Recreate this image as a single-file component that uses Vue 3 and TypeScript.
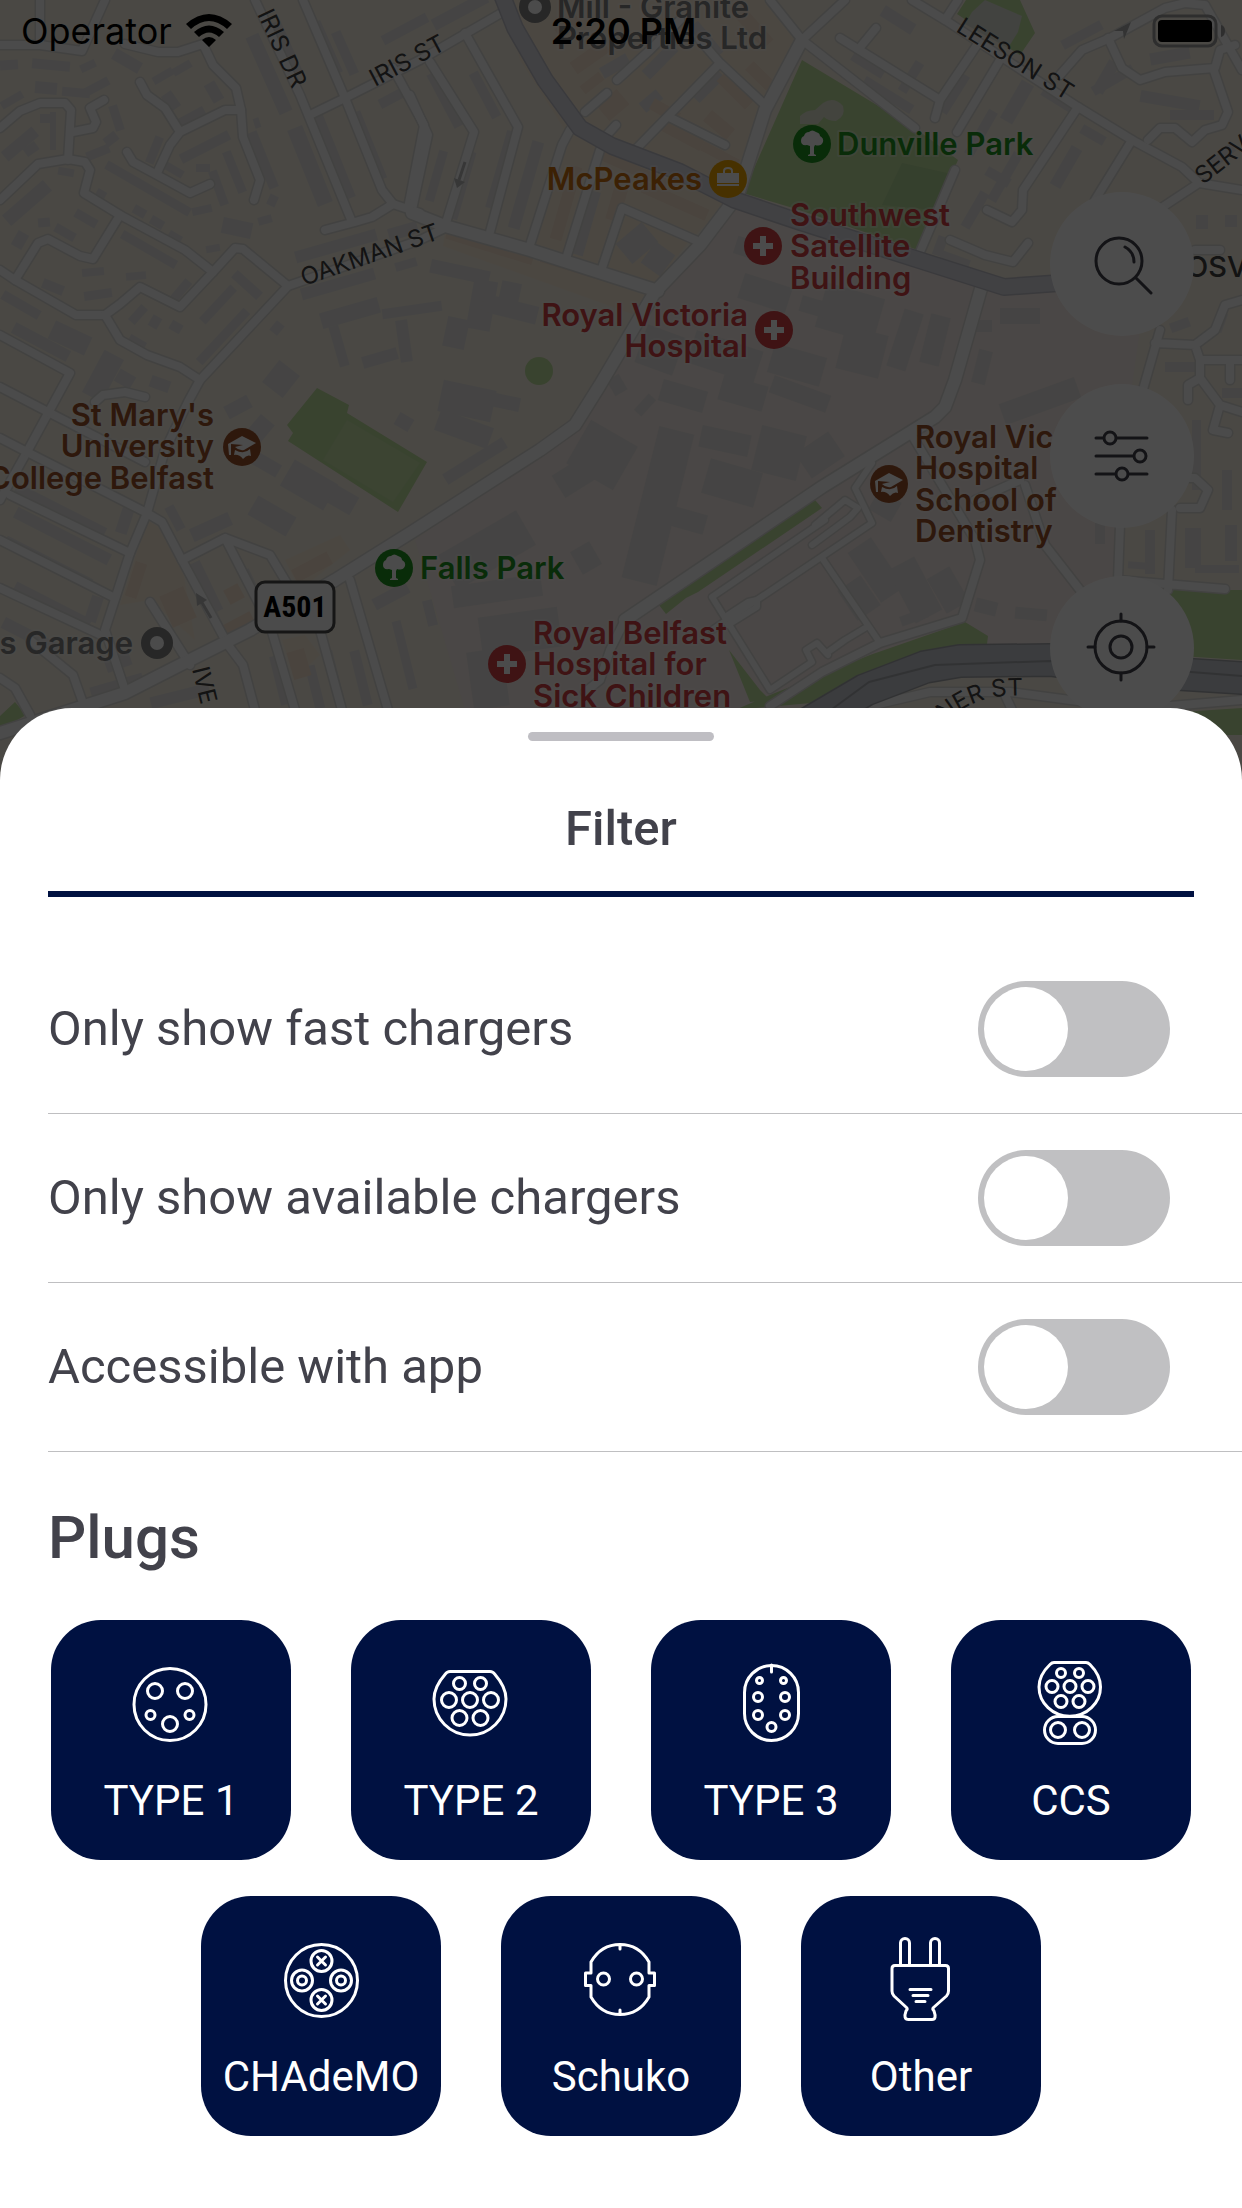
<script setup lang="ts">
import { ref } from 'vue'

interface FilterOption {
  id: string
  label: string
  enabled: boolean
}

interface Plug {
  id: string
  label: string
}

interface Poi {
  kind: 'shop' | 'park' | 'hospital' | 'school' | 'place'
  x: number
  y: number
  textX: number
  anchor: 'start' | 'end'
  baseline: number
  lines: string[]
}

const options = ref<FilterOption[]>([
  { id: 'fast', label: 'Only show fast chargers', enabled: false },
  { id: 'available', label: 'Only show available chargers', enabled: false },
  { id: 'app', label: 'Accessible with app', enabled: false },
])

const plugs: Plug[] = [
  { id: 'type1', label: 'TYPE 1' },
  { id: 'type2', label: 'TYPE 2' },
  { id: 'type3', label: 'TYPE 3' },
  { id: 'ccs', label: 'CCS' },
  { id: 'chademo', label: 'CHAdeMO' },
  { id: 'schuko', label: 'Schuko' },
  { id: 'other', label: 'Other' },
]

const selected = ref<string[]>(plugs.map((plug) => plug.id))

function togglePlug(id: string): void {
  selected.value = selected.value.includes(id)
    ? selected.value.filter((item) => item !== id)
    : [...selected.value, id]
}

const pois: Poi[] = [
  { kind: 'place', x: 535, y: 7, textX: 557, anchor: 'start', baseline: 18, lines: ['Mill - Granite', 'Properties Ltd'] },
  { kind: 'shop', x: 728, y: 179, textX: 702, anchor: 'end', baseline: 190, lines: ['McPeakes'] },
  { kind: 'park', x: 812, y: 144, textX: 837, anchor: 'start', baseline: 155, lines: ['Dunville Park'] },
  { kind: 'hospital', x: 763, y: 246, textX: 790, anchor: 'start', baseline: 226, lines: ['Southwest', 'Satellite', 'Building'] },
  { kind: 'hospital', x: 774, y: 330, textX: 748, anchor: 'end', baseline: 326, lines: ['Royal Victoria', 'Hospital'] },
  { kind: 'school', x: 242, y: 447, textX: 214, anchor: 'end', baseline: 426, lines: ["St Mary's", 'University', 'College Belfast'] },
  { kind: 'park', x: 394, y: 568, textX: 420, anchor: 'start', baseline: 579, lines: ['Falls Park'] },
  { kind: 'place', x: 157, y: 643, textX: 133, anchor: 'end', baseline: 654, lines: ['s Garage'] },
  { kind: 'hospital', x: 507, y: 664, textX: 533, anchor: 'start', baseline: 644, lines: ['Royal Belfast', 'Hospital for', 'Sick Children'] },
  { kind: 'school', x: 889, y: 484, textX: 915, anchor: 'start', baseline: 448, lines: ['Royal Vic', 'Hospital', 'School of', 'Dentistry'] },
]

const streets: string[] = [
  'M0 45H40L82 51L105 0M40 0V45',
  'M125 44L158 52H178L203 44L213 65L236 88L241 110L243 137L260 180L254 200',
  'M140 82L147 95L165 108L180 132L225 110H241M180 132L170 145L157 173',
  'M127 152L133 162L157 175L190 193L210 184',
  'M0 128L20 111L40 103H65L71 110L68 160M73 132L93 128L96 122L90 108L104 100',
  'M0 200L38 164L68 159L85 162L90 170L84 193L120 215L185 250L213 272',
  'M120 215L93 259L80 256L48 239L38 243L15 280',
  'M0 270L15 280L76 315H105L120 304L140 287L180 307L213 272L235 248L243 249L288 286L200 380L188 402L165 450L147 513L130 553L105 630L125 690',
  'M105 315L120 340L147 355L180 367L200 380',
  'M255 0L300 95L352 222M325 230L355 222L372 217L393 204L420 213',
  'M303 0L345 98L382 190L393 204M310 115L345 98L420 60L510 8',
  'M393 68L424 125L408 208',
  'M0 335L70 373L28 450L0 500M288 286L420 240L443 229',
  'M465 33L518 127L490 232M430 62L474 132L445 226M410 95L428 135L412 210',
  'M570 130L562 145L530 245M600 150L565 262',
  'M585 112L607 93M617 80L650 50L680 20M616 125L605 137',
  'M635 150L720 63L700 40M669 117L725 145M720 63L765 105',
  'M770 0L802 40L915 128M802 40L845 0',
  'M622 208L702 243M622 208L602 268',
  'M912 0L945 20L1078 107L1132 140L1182 167L1199 183L1155 212M1199 183L1242 190',
  'M840 38L940 100L935 118M862 45L876 28M977 45L940 100M1000 60L957 132M945 20L958 0',
  'M955 170L920 252M1078 107L1023 190L1022 210L1012 222L987 210M1132 140L1095 200',
  'M950 240L985 255L1013 262L1028 243',
  'M1060 75L1082 50L1110 38L1165 8L1185 3L1205 5L1242 70',
  'M1108 38L1122 68L1140 80L1165 72L1215 68L1220 50L1235 45M1213 68L1228 112L1222 125L1205 130L1192 142L1175 128H1160L1148 140',
  'M1160 330L1140 400M1155 343L1195 345L1215 330L1225 305L1242 300M1195 345L1200 360H1242M1200 360V378L1188 385V400M1200 378L1220 405L1242 412M1220 405L1213 430L1228 433M1230 360V380M1195 250H1220',
  'M1120 525L1118 580L1225 589M1172 510L1168 590M1180 508H1200L1208 490L1195 478H1185',
  'M910 432L975 540L980 560L962 618L880 643L822 672L770 706',
  'M1025 485L1045 545L1080 590L1100 605M975 500L1020 480',
  'M0 387L50 413L145 462M0 438L27 452L145 512L162 522L182 560L228 645L243 665L255 710',
  'M10 495L130 553M0 540L115 598M0 588L105 637M30 640L73 675L83 703M0 678L15 688L30 715',
  'M182 560L225 538L270 555L300 605M225 538L262 610M150 602L190 665',
  'M272 632L295 710M320 630L342 710M350 580L388 710M95 402L103 395L125 392L145 397',
  'M625 620L610 650L600 680L585 692M870 706L930 692H1010L1100 704L1170 706L1242 700M1005 695L1012 710',
]

const thinStreets: string[] = [
  'M872 463L855 488L872 523L712 630M712 597L770 690L812 662L806 650L817 643L828 655M712 597L825 520',
  'M728 625L757 607V600L748 602L725 617M812 545L850 517L858 508L845 500L815 525M822 558L878 640M828 652L845 640L865 628',
]

const mainStreets: string[] = [
  'M412 213L445 226L530 250L658 291',
  'M802 40L765 110L738 195L700 245L655 292L600 385L575 425L540 450L415 530L335 580L250 630L180 665L125 693L0 733',
  'M982 285L955 380L945 407L935 417L822 487L625 620',
]

// x, y, width, height, rotation in degrees
const buildings: number[][] = [
  [0, 60, 18, 10, -4], [32, 60, 38, 10, 5], [80, 62, 16, 8, -25], [112, 55, 30, 12, 30], [35, 82, 22, 12, 5],
  [62, 88, 28, 9, 5], [84, 82, 26, 9, -28], [0, 96, 24, 8, -30], [40, 114, 16, 9, 0], [50, 112, 6, 38, 0],
  [152, 72, 22, 8, -30], [172, 64, 20, 8, -30], [165, 92, 12, 18, -35], [178, 112, 28, 10, -28], [208, 82, 12, 20, -30],
  [178, 142, 54, 10, -27], [150, 136, 9, 28, 22], [112, 105, 9, 26, -18], [86, 148, 24, 9, -22], [104, 134, 14, 10, -38],
  [0, 138, 40, 12, -40], [24, 144, 14, 10, -35], [0, 196, 54, 14, -41], [58, 168, 16, 8, 10], [100, 184, 96, 9, 30],
  [164, 166, 20, 8, 30], [196, 164, 14, 8, 0], [214, 170, 9, 36, -20], [230, 150, 9, 44, -22], [258, 130, 10, 60, -22],
  [254, 118, 6, 10, -18], [222, 220, 30, 16, 12], [258, 216, 14, 8, -15], [268, 195, 9, 11, 25], [192, 206, 20, 8, -12],
  [96, 190, 10, 8, 30], [133, 207, 13, 9, 30], [150, 218, 14, 9, 30], [168, 233, 14, 8, 30], [206, 245, 14, 7, -10],
  [38, 218, 12, 9, -5], [14, 232, 12, 16, 30], [54, 228, 22, 9, 30], [74, 214, 24, 9, 30], [118, 245, 62, 9, 30],
  [176, 278, 9, 26, 40], [230, 280, 34, 10, 42], [42, 282, 22, 10, 22], [82, 268, 22, 8, -5], [84, 290, 28, 9, -8],
  [126, 272, 20, 8, -5], [0, 300, 42, 10, 30], [50, 328, 40, 20, 25], [10, 336, 62, 12, 28], [92, 352, 22, 48, 28],
  [195, 300, 46, 9, -47], [188, 332, 70, 9, -47], [128, 310, 20, 9, -48], [150, 316, 10, 12, 30], [170, 322, 12, 10, 30],
  [272, 322, 10, 12, 40], [268, 365, 26, 28, 38], [128, 338, 18, 9, 30], [116, 372, 18, 14, 30], [150, 378, 20, 12, 20],
  [262, 32, 14, 84, -24], [280, 20, 12, 56, -24], [302, 125, 16, 82, -22], [325, 110, 14, 92, -22], [362, 110, 12, 72, -22],
  [378, 92, 32, 10, -28], [294, 240, 84, 12, -16], [300, 278, 76, 12, -16], [388, 225, 30, 12, -16], [395, 260, 22, 9, -16],
  [320, 305, 60, 16, -16], [334, 325, 10, 42, -16], [382, 305, 60, 10, -8], [398, 320, 12, 42, -8], [430, 265, 60, 14, 12],
  [470, 280, 24, 50, 10], [445, 318, 22, 30, 12], [500, 282, 20, 22, 12], [482, 300, 56, 18, 14], [362, 352, 36, 12, -16],
  [320, 20, 12, 56, -24], [340, 30, 10, 46, -24], [380, 24, 50, 10, -28], [440, 70, 10, 60, -28], [480, 70, 10, 50, -28],
  [455, 150, 12, 70, 16], [496, 130, 12, 80, 16], [432, 150, 9, 52, 16], [520, 140, 12, 90, 16], [430, 5, 60, 12, -28],
  [580, 190, 12, 66, 16], [620, 230, 34, 26, -40], [646, 246, 24, 26, 36], [640, 55, 40, 12, -45], [690, 80, 36, 12, -45],
  [640, 95, 22, 12, -40], [700, 20, 12, 40, -40], [600, 60, 30, 12, -30],
  [246, 415, 18, 40, 40], [232, 452, 50, 14, 30], [284, 470, 50, 30, 30], [250, 505, 44, 22, 30], [330, 490, 26, 20, 30],
  [190, 520, 42, 14, -24], [225, 400, 26, 14, -28], [396, 415, 16, 14, 30], [170, 505, 10, 26, -28],
  [10, 505, 100, 12, 27], [10, 530, 105, 12, 27], [0, 557, 96, 12, 27], [10, 600, 84, 12, 27], [0, 630, 60, 12, 27],
  [120, 500, 12, 34, 18], [88, 596, 12, 26, 18], [200, 560, 12, 54, -26], [250, 568, 10, 50, -26], [208, 600, 10, 30, -26],
  [275, 655, 12, 50, -14], [310, 665, 10, 44, -14], [356, 650, 10, 56, -14], [330, 650, 9, 56, -14], [400, 620, 9, 70, -14],
  [372, 590, 38, 12, -28], [90, 680, 54, 12, -16], [150, 690, 60, 12, -14], [105, 655, 26, 14, -20],
  [440, 385, 54, 32, 12], [436, 418, 56, 22, 20], [490, 395, 30, 14, 12], [440, 455, 70, 12, -32],
  [442, 530, 90, 40, -30], [452, 580, 90, 22, -8], [480, 612, 80, 40, -8], [470, 650, 36, 58, -8], [425, 600, 10, 26, -14],
  [575, 545, 22, 26, -30], [554, 458, 60, 26, -32], [575, 430, 54, 50, 30], [634, 400, 22, 10, -48],
  [640, 428, 36, 156, 14], [668, 510, 38, 20, 16], [700, 430, 50, 22, 12], [705, 465, 54, 36, 16], [756, 430, 46, 46, 14],
  [660, 385, 46, 22, 16], [720, 380, 46, 26, 16], [770, 385, 60, 18, 20], [800, 440, 40, 30, -34], [610, 376, 14, 18, -30],
  [640, 330, 40, 40, 20], [690, 340, 70, 34, 18], [770, 350, 54, 30, 16], [740, 280, 50, 26, 18], [820, 290, 60, 46, 16],
  [840, 330, 44, 44, 14], [800, 300, 36, 16, 16], [735, 240, 30, 18, 18], [895, 310, 20, 60, 18], [925, 315, 20, 50, 14],
  [970, 320, 22, 12, 0], [1000, 308, 40, 16, 0], [975, 350, 14, 34, 14], [1000, 390, 80, 22, -20],
  [862, 540, 28, 60, -34], [900, 560, 30, 60, -28], [935, 570, 26, 40, -30], [845, 580, 28, 36, -34], [975, 600, 22, 14, 14],
  [1015, 608, 32, 12, 5], [872, 495, 26, 22, 30], [900, 612, 28, 10, -20],
  [850, 60, 36, 10, 32], [880, 14, 36, 12, 32], [906, 60, 10, 34, 32], [860, 90, 56, 10, 32], [950, 72, 9, 44, 32],
  [1010, 80, 14, 44, 30], [1040, 96, 40, 10, 32], [976, 108, 10, 50, 30], [1000, 150, 10, 54, 30], [1060, 145, 12, 44, 30],
  [1080, 130, 26, 10, 30], [970, 190, 10, 40, 30], [985, 172, 26, 10, 30], [940, 255, 30, 10, 20], [935, 236, 10, 20, 20],
  [1090, 75, 46, 10, -30], [1100, 60, 12, 34, 30], [1140, 95, 60, 12, 10], [1150, 50, 40, 12, -10], [1170, 110, 44, 10, 0],
  [1110, 20, 50, 10, -28], [1060, 30, 44, 10, -28], [1210, 150, 26, 10, -40], [1196, 215, 12, 14, 0], [1225, 215, 12, 12, 0],
  [1170, 320, 20, 10, -20], [1165, 362, 30, 10, 0], [1215, 312, 10, 20, 20], [1192, 420, 9, 70, 0], [1222, 388, 20, 10, 0],
  [1095, 520, 10, 24, 0], [1145, 530, 10, 44, 0], [1185, 528, 16, 40, 0], [1225, 525, 12, 36, 0], [1128, 562, 20, 7, 4],
  [1195, 565, 44, 8, 0], [1130, 420, 9, 60, 8], [1222, 470, 10, 40, 0],
]

const warmBuildings: number[][] = [
  [555, 20, 26, 12, -40], [570, 50, 40, 14, -35], [600, 95, 26, 20, -40], [580, 78, 24, 10, -38], [650, 105, 30, 12, 30],
  [655, 128, 50, 12, 28], [700, 150, 40, 10, 28], [704, 118, 30, 14, 40], [715, 85, 40, 12, 45], [560, 165, 12, 76, 16],
  [600, 165, 70, 10, 24], [640, 195, 70, 12, 24], [610, 185, 14, 36, 16], [445, 240, 90, 12, 17], [540, 262, 80, 12, 17],
  [730, 20, 46, 14, 48], [745, 70, 30, 12, 45], [165, 590, 26, 34, -24], [130, 562, 12, 36, 18], [226, 586, 16, 16, -28],
  [222, 618, 32, 12, -28], [292, 560, 40, 14, -28], [290, 650, 18, 28, -16],
]

function boxTransform(box: number[]): string {
  return `rotate(${box[4]} ${box[0] + box[2] / 2} ${box[1] + box[3] / 2})`
}
</script>

<template>
  <div class="screen">
    <svg class="map" viewBox="0 0 1242 800" preserveAspectRatio="xMidYMin slice" role="img" aria-label="Map of west Belfast">
      <rect class="land" width="1242" height="800" />
      <path class="warm" d="M505 0H770L800 35L738 195L690 240L655 285L530 245L565 130L520 60Z M445 232L650 295L635 315L443 246Z M147 520L165 530L182 565L195 640L150 600L120 605Z M285 560L340 535L350 550L300 590Z M282 640L305 635L320 655L295 678Z" />
      <path class="clinic" d="M735 205L920 256L1005 292L1110 286L1140 330L1130 400L1118 530V655H960L822 695L770 710H465L415 540L540 452L600 385L655 292L705 245Z" />
      <path class="green" d="M802 60L915 128L958 160L918 250L793 208L743 193Z M957 14L966 0H1020L1035 33L1020 55L1004 45Z M317 388L349 405L347 413L427 462L398 512L288 441L293 433L287 425Z M815 500L822 508L698 592L686 598L666 614L659 605Z M735 710L770 695L870 655L965 622L988 636L985 660L822 702Z M729 650L760 690L770 700L750 702Z M1168 590H1242V660L1118 652V612Z M1242 708L1120 716L1200 735H1242Z M0 716L15 702L26 715L0 730Z" />
      <path class="green-dark" d="M902 163L956 175L935 210L882 205Z" />
      <path class="green-light" d="M347 420L420 463L393 502L323 460Z" />
      <circle class="green" cx="539" cy="371" r="14" />
      <path class="pond" d="M800 124L800 116Q806 110 815 110L823 103Q834 96 843 106Q846 116 836 121Q828 121 824 117L818 124Z" />
      <path class="plaza" d="M972 12L985 0L1022 16L1018 32L1008 48L965 24Z" />

      <g class="buildings">
        <rect v-for="(box, i) in buildings" :key="i" :x="box[0]" :y="box[1]" :width="box[2]" :height="box[3]" :transform="boxTransform(box)" />
      </g>
      <g class="warm-buildings">
        <rect v-for="(box, i) in warmBuildings" :key="i" :x="box[0]" :y="box[1]" :width="box[2]" :height="box[3]" :transform="boxTransform(box)" />
      </g>

      <path v-for="d in thinStreets" :key="d" class="casing thin" :d="d" />
      <path v-for="d in streets" :key="d" class="casing" :d="d" />
      <path v-for="d in mainStreets" :key="d" class="casing main" :d="d" />
      <path v-for="d in thinStreets" :key="'r' + d" class="road thin" :d="d" />
      <path v-for="d in streets" :key="'r' + d" class="road" :d="d" />
      <path v-for="d in mainStreets" :key="'r' + d" class="road main" :d="d" />

      <path class="artery-edge" d="M500 -10L515 28L545 80L580 128L612 146L680 172L735 200L800 222L919 260L1004 287L1060 283L1120 280" />
      <path class="artery" d="M500 -10L515 28L545 80L580 128L612 146L680 172L735 200L800 222L919 260L1004 287L1060 283L1120 280" />
      <path class="highway-edge" d="M780 740L865 690L925 667L960 661L1050 660L1130 671L1242 678" />
      <path class="highway" d="M780 740L865 690L925 667L960 661L1050 660L1130 671L1242 678" />
      <path class="highway-line" d="M790 740L869 682L935 665L1050 661L1242 676" />

      <g class="arrow">
        <path d="M465 162L459 180" />
        <path class="arrow-head" d="M454 178L465 182L457 188Z" />
        <path d="M211 618L201 601" />
        <path class="arrow-head" d="M196 593L207 600L197 606Z" />
      </g>

      <g class="street-name">
        <text transform="translate(257 14) rotate(65)">IRIS DR</text>
        <text transform="translate(375 87) rotate(-28)">IRIS ST</text>
        <text transform="translate(304 286) rotate(-19)">OAKMAN ST</text>
        <text transform="translate(955 31) rotate(32)">LEESON ST</text>
        <text transform="translate(1203 185) rotate(-38)">SERV</text>
        <text transform="translate(192 669) rotate(76)">IVE</text>
        <path id="curve" class="guide" d="M930 734Q968 698 1004 696T1060 700" />
        <text><textPath href="#curve" startOffset="18">NER ST</textPath></text>
      </g>
      <text class="district" x="1186" y="277">OSV</text>

      <g v-for="poi in pois" :key="poi.lines[0]" :class="['poi', poi.kind]">
        <text :text-anchor="poi.anchor">
          <tspan v-for="(line, n) in poi.lines" :key="line" :x="poi.textX" :y="poi.baseline + Math.floor(n * 31.5)">{{ line }}</tspan>
        </text>
        <g :transform="`translate(${poi.x} ${poi.y})`">
          <circle class="dot" :r="poi.kind === 'place' ? 16 : 19" />
          <circle v-if="poi.kind === 'place'" class="glyph" r="7" />
          <path v-else-if="poi.kind === 'hospital'" class="glyph" d="M-3 -10H3V-3H10V3H3V10H-3V3H-10V-3H-3Z" />
          <path v-else-if="poi.kind === 'park'" class="glyph" d="M-4 12V11L-2 10V2L-5 1Q-11 2 -11 -3Q-11 -7 -8 -8Q-7 -12 -3 -12Q0 -15 4 -12Q8 -11 8 -8Q12 -6 11 -2Q9 3 3 1L2 3V10L4 11V12Z" />
          <g v-else-if="poi.kind === 'shop'">
            <path class="glyph" d="M-11 -6H11V4H-11Z M-11 5H11V7H-11Z" />
            <path class="handle-line" d="M-4 -6V-8Q-4 -11 0 -11T4 -8V-6" />
          </g>
          <path v-else class="glyph" d="M-14 -3L0 -11L14 -4L2 3Q-3 4 -7 0L1 -2L-11 -3V8H-13ZM-7 3Q2 8 8 2L9 9Q5 7 1 12Q-3 7 -8 8Z" />
        </g>
      </g>

      <g class="shield">
        <rect x="256" y="582" width="78" height="50" rx="9" />
        <text x="295" y="617" text-anchor="middle">A501</text>
      </g>
    </svg>

    <div class="map-controls">
      <button class="round" type="button" aria-label="Search">
        <svg viewBox="0 0 144 144">
          <circle cx="69" cy="69" r="23" />
          <path d="M86 86L101 101M75 55Q84 60 84 70" />
        </svg>
      </button>
      <button class="round" type="button" aria-label="Filter">
        <svg viewBox="0 0 144 144">
          <path d="M46 54H53M67 54H97M46 72H83M46 90H65M79 90H97" />
          <circle cx="60" cy="54" r="6" />
          <circle cx="90" cy="72" r="6" />
          <circle cx="72" cy="90" r="6" />
        </svg>
      </button>
      <button class="round" type="button" aria-label="My location">
        <svg viewBox="0 0 144 144">
          <circle cx="71" cy="71" r="26" />
          <circle cx="71" cy="71" r="11" />
          <path d="M71 38V45M71 97V104M38 71H45M97 71H104" />
        </svg>
      </button>
    </div>

    <div class="scrim"></div>

    <header class="status">
      <div class="carrier">
        <span>Operator</span>
        <svg class="wifi" viewBox="0 0 46 34" aria-hidden="true">
          <path d="M0 10Q23 -10 46 10L41 15Q23 -1 5 15ZM8 18Q23 5 38 18L33 23Q23 14 13 23ZM16 26Q23 20 30 26L23 33Z" />
        </svg>
      </div>
      <time class="clock">2:20 PM</time>
      <div class="indicators">
        <svg class="location" viewBox="0 0 18 18" aria-hidden="true"><path d="M0 9L17 0L10 17L9 9Z" /></svg>
        <svg class="battery" viewBox="0 0 74 34" aria-hidden="true">
          <rect class="case" x="2" y="2" width="62" height="30" rx="8" />
          <rect x="6" y="6" width="54" height="22" rx="4" />
          <path class="nub" d="M69 11Q73 12 73 17T69 23Z" />
        </svg>
      </div>
    </header>

    <div class="stage"></div>

    <main class="sheet">
      <div class="grabber"></div>
      <h1 class="title">Filter</h1>

      <ul class="options">
        <li v-for="option in options" :key="option.id" class="option">
          <label :for="option.id">{{ option.label }}</label>
          <input :id="option.id" v-model="option.enabled" class="switch" type="checkbox" role="switch" />
        </li>
      </ul>

      <h2 class="section">Plugs</h2>
      <div class="plugs">
        <button
          v-for="plug in plugs"
          :key="plug.id"
          class="plug"
          type="button"
          :aria-pressed="selected.includes(plug.id)"
          @click="togglePlug(plug.id)"
        >
          <svg class="plug-icon" viewBox="0 0 84 84" aria-hidden="true">
            <g v-if="plug.id === 'type1'">
              <circle cx="41" cy="43.5" r="36" />
              <circle cx="26" cy="30" r="7.5" /><circle cx="56" cy="30" r="7.5" /><circle cx="41" cy="63" r="7.5" />
              <circle cx="21.5" cy="54" r="4.5" /><circle cx="60.5" cy="54" r="4.5" />
            </g>
            <g v-else-if="plug.id === 'type2'">
              <path d="M21 10.5H61Q64 10.5 66 13.5Q77 26 77 38A36 36 0 0 1 5 38Q5 26 16 13.5Q18 10.5 21 10.5Z" />
              <circle cx="30.5" cy="22.5" r="6" /><circle cx="51.5" cy="22.5" r="6" />
              <circle cx="20" cy="39" r="7.5" /><circle cx="41" cy="39" r="7.5" /><circle cx="62" cy="39" r="7.5" />
              <circle cx="30.5" cy="57" r="7.5" /><circle cx="51.5" cy="57" r="7.5" />
            </g>
            <g v-else-if="plug.id === 'type3'">
              <rect x="15.5" y="4.5" width="54" height="75" rx="27" />
              <path d="M42.5 4V11" />
              <circle cx="30.5" cy="19.5" r="3" /><circle cx="54.5" cy="19.5" r="3" />
              <circle cx="29" cy="36" r="4.5" /><circle cx="56" cy="36" r="4.5" />
              <circle cx="29" cy="54" r="4.5" /><circle cx="56" cy="54" r="4.5" /><circle cx="42.5" cy="66" r="4.5" />
            </g>
            <g v-else-if="plug.id === 'ccs'">
              <path d="M25 1.5H57Q59 1.5 61 3.5Q71.5 14 71.5 26A30.5 29 0 0 1 10 26Q10 14 21 3.5Q23 1.5 25 1.5Z" />
              <circle cx="32" cy="12" r="4.5" /><circle cx="50" cy="12" r="4.5" />
              <circle cx="23" cy="25.5" r="6" /><circle cx="41" cy="25.5" r="6" /><circle cx="59" cy="25.5" r="6" />
              <circle cx="32" cy="40.5" r="6" /><circle cx="50" cy="40.5" r="6" />
              <rect x="15.5" y="55.5" width="51" height="27" rx="13.5" />
              <circle cx="29" cy="69" r="7.5" /><circle cx="53" cy="69" r="7.5" />
            </g>
            <g v-else-if="plug.id === 'chademo'">
              <circle cx="42.5" cy="43.5" r="36" />
              <circle cx="42.5" cy="24" r="10.5" /><circle cx="42.5" cy="63" r="10.5" />
              <circle cx="23" cy="43.5" r="10.5" /><circle cx="62" cy="43.5" r="10.5" />
              <circle cx="23" cy="43.5" r="4.5" /><circle cx="62" cy="43.5" r="4.5" />
              <path d="M38.5 20L46.5 28M46.5 20L38.5 28M38.5 59L46.5 67M46.5 59L38.5 67" />
            </g>
            <g v-else-if="plug.id === 'schuko'">
              <path d="M12 25Q22 7.500 41 7.500T70 25V36H75.500V48.500H70V60Q60 77.500 41 77.500T12 60V48.500H6.500V36H12ZM41 8V12M41 73V77" />
              <circle cx="24.5" cy="42" r="6" /><circle cx="57.5" cy="42" r="6" />
            </g>
            <g v-else>
              <path d="M21.500 28V6A4.500 4.500 0 0 1 30.500 6V28M51.500 28V6A4.500 4.500 0 0 1 60.500 6V28" />
              <path d="M16 28.500H66.500Q69.500 28.500 69.500 31.500V54Q69.500 57 67.500 59L54.500 70.500Q53 72 55 74Q58 82.500 53 82.500H29.500Q24 82.500 27 74Q29 72 27.500 70.500L15 59Q13 57 13 54V31.500Q13 28.500 16 28.500Z" />
              <path d="M31 52.500H52M34 58.500H49M37 64.500H46" />
            </g>
          </svg>
          <span>{{ plug.label }}</span>
        </button>
      </div>
    </main>
  </div>
</template>

<style>
body {
  margin: 0;
}
</style>

<style scoped>
.screen {
  position: relative;
  display: flex;
  flex-direction: column;
  min-height: 100vh;
  overflow: hidden;
  background: #4a4844;
  color: #42424b;
  font-family: Roboto, "Open Sans", sans-serif;
}

.map {
  position: absolute;
  top: 0;
  left: 0;
  width: 100%;
  min-height: 800px;
  font-family: Inter, "Liberation Sans", sans-serif;
}

.land { fill: #f8f1e3; }
.warm { fill: #fbeedb; }
.clinic { fill: #f9ede9; }
.green { fill: #bfdf9f; }
.green-dark { fill: #b2d696; }
.green-light { fill: #c8e3a9; }
.pond { fill: #e0e4cf; }
.plaza { fill: #dde0d5; }
.buildings { fill: #e6e5e3; }
.warm-buildings { fill: #f8e3cf; }

.casing,
.road,
.artery,
.artery-edge,
.highway,
.highway-edge,
.highway-line {
  fill: none;
  stroke-linecap: round;
  stroke-linejoin: round;
}

.casing { stroke: #dddcd9; stroke-width: 11; }
.road { stroke: #fafafa; stroke-width: 8; }
.casing.thin { stroke-width: 9; }
.road.thin { stroke-width: 6; }
.casing.main { stroke-width: 15; }
.road.main { stroke-width: 12; }
.artery-edge { stroke: #c2c2ca; stroke-width: 18; }
.artery { stroke: #d9d9e2; stroke-width: 15; }
.highway-edge { stroke: #a5a7ac; stroke-width: 34; }
.highway { stroke: #c5c8cf; stroke-width: 31; }
.highway-line { fill: none; stroke: #a5a7ac; stroke-width: 2; }

.arrow { fill: none; stroke: #b8b8b8; stroke-width: 3; }
.arrow-head { fill: #b8b8b8; stroke: none; }

.street-name { font-size: 24px; fill: #404040; }
.guide { fill: none; }
.district { font-size: 29px; font-weight: 500; fill: #404040; }

.poi text {
  font-size: 31px;
  font-weight: 600;
  paint-order: stroke;
  stroke: #ffffff;
  stroke-opacity: 0.3;
  stroke-width: 4px;
  stroke-linejoin: round;
}
.shop { fill: #c8700e; }
.park { fill: #1f931f; }
.hospital { fill: #d24144; }
.school { fill: #9c522b; }
.place { fill: #838383; }
.shop .dot { fill: #efa500; }
.glyph { fill: #fafafa; }
.handle-line { fill: none; stroke: #fafafa; stroke-width: 2; }

.shield rect { fill: #fafafa; stroke: #4a4a4a; stroke-width: 3; }
.shield text {
  fill: #000000;
  font-family: "Liberation Sans Narrow", "Roboto Condensed", Roboto, sans-serif;
  font-size: 30px;
  font-weight: 700;
}

.map-controls {
  position: absolute;
  top: 192px;
  right: 48px;
  display: flex;
  flex-direction: column;
  gap: 48px;
}

.round {
  width: 144px;
  height: 144px;
  padding: 0;
  border: 0;
  border-radius: 50%;
  background: #ffffff;
}

.round svg {
  display: block;
  fill: none;
  stroke: #42424b;
  stroke-width: 3;
  stroke-linecap: round;
}

.scrim {
  position: absolute;
  inset: 0;
  background: rgba(0, 0, 0, 0.7);
}

.status {
  position: relative;
  display: grid;
  grid-template-columns: 1fr auto 1fr;
  align-items: center;
  height: 60px;
  padding: 2px 16px 0 21px;
  box-sizing: border-box;
  color: #000000;
  font-family: Inter, "Liberation Sans", sans-serif;
  font-size: 36px;
}

.carrier,
.indicators {
  display: flex;
  align-items: center;
  gap: 14px;
}

.indicators {
  justify-content: flex-end;
  gap: 20px;
}

.clock { font-weight: 600; }
.wifi { width: 46px; height: 34px; }
.location { width: 18px; height: 18px; fill: #333333; }
.battery { width: 74px; height: 34px; }
.case { fill: none; stroke: #2e2e2e; stroke-width: 3; }
.nub { fill: #2e2e2e; }

.stage {
  flex: 1;
  min-height: 240px;
}

.sheet {
  position: relative;
  padding: 24px 0 72px;
  border-radius: 72px 72px 0 0;
  background: #ffffff;
}

.grabber {
  width: 186px;
  height: 9px;
  margin: 0 auto;
  border-radius: 5px;
  background: #bfbec3;
}

.title {
  margin: 60px 48px 48px;
  padding-bottom: 34px;
  border-bottom: 6px solid #001141;
  font-size: 49px;
  font-weight: 500;
  line-height: 56px;
  text-align: center;
}

.options {
  margin: 0;
  padding: 0 0 0 48px;
  list-style: none;
}

.option {
  display: flex;
  align-items: center;
  justify-content: space-between;
  padding: 36px 72px 36px 0;
  border-bottom: 1px solid #bfbfc1;
  font-size: 49px;
  line-height: 56px;
}

.switch {
  appearance: none;
  display: flex;
  flex: none;
  width: 192px;
  height: 96px;
  margin: 0;
  padding: 6px;
  box-sizing: border-box;
  border-radius: 48px;
  background: #c0c0c2;
}

.switch::before {
  content: "";
  width: 84px;
  height: 84px;
  border-radius: 50%;
  background: #ffffff;
}

.switch:checked {
  justify-content: flex-end;
  background: #001141;
}

.section {
  margin: 50px 48px 46px;
  font-size: 60px;
  font-weight: 500;
  line-height: 72px;
}

.plugs {
  display: flex;
  flex-wrap: wrap;
  justify-content: center;
  gap: 36px 60px;
  padding: 0 48px;
}

.plug {
  display: flex;
  flex-direction: column;
  align-items: center;
  width: 240px;
  height: 240px;
  padding: 41px 0 0;
  gap: 32px;
  border: 0;
  border-radius: 50px;
  background: #001141;
  color: #ffffff;
  font-family: inherit;
  font-size: 42px;
  line-height: 48px;
}

.plug-icon {
  width: 84px;
  height: 84px;
  fill: none;
  stroke: #ffffff;
  stroke-width: 3;
  stroke-linecap: round;
  stroke-linejoin: round;
}
</style>
